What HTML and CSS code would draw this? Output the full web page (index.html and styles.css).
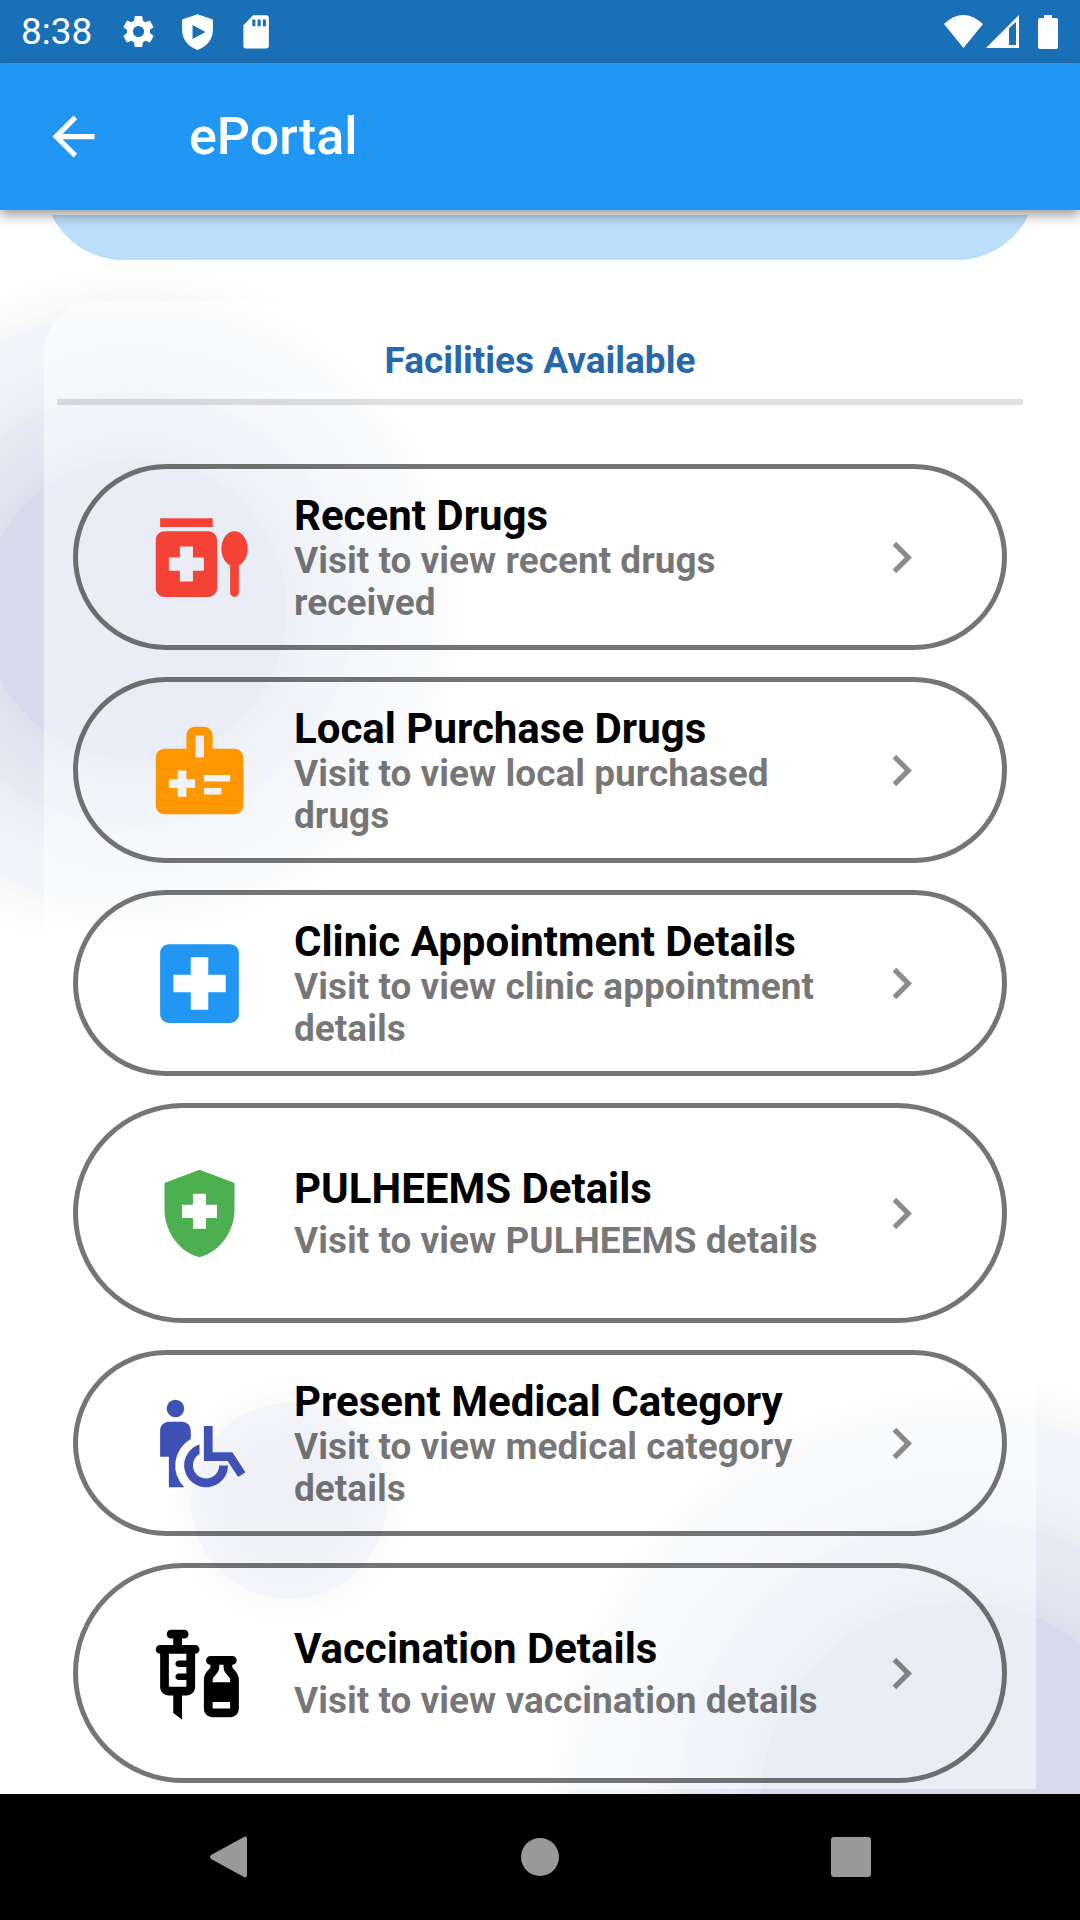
FILE: index.html
```html
<!DOCTYPE html>
<html lang="en">
<head>
<meta charset="utf-8">
<meta name="viewport" content="width=device-width, initial-scale=1">
<title>ePortal</title>
<link rel="stylesheet" href="styles.css">
</head>
<body>
<div class="status-bar">
  <span class="clock">8:38</span>
  <svg class="status-icon" viewBox="0 0 24 24" aria-hidden="true"><path fill-rule="evenodd" d="M19.400 13c.04-.3.060-.65.060-1s-.02-.7-.07-1l2.100-1.600c.2-.150.240-.420.120-.640l-2-3.460c-.12-.22-.37-.3-.6-.22l-2.480 1c-.520-.4-1.080-.73-1.690-.980l-.380-2.650A.49.490 0 0 0 14 2h-4c-.25 0-.46.180-.49.420l-.38 2.650c-.61.250-1.170.59-1.690.98l-2.490-1c-.23-.090-.49 0-.61.220l-2 3.460c-.13.220-.070.490.120.640L4.570 11a8 8 0 0 0 0 2l-2.110 1.630c-.19.150-.24.420-.12.640l2 3.460c.12.220.370.300.600.220l2.490-1c.52.400 1.080.730 1.690.980l.380 2.650c.030.240.240.420.490.420h4c.25 0 .460-.180.490-.420l.380-2.650c.610-.250 1.170-.590 1.690-.980l2.490 1c.230.090.490 0 .610-.220l2-3.460c.120-.220.070-.490-.120-.640zM12 15.600a3.600 3.600 0 1 1 0-7.200 3.600 3.600 0 0 1 0 7.200z"/></svg>
  <svg class="status-icon" viewBox="0 0 24 24" aria-hidden="true"><path fill-rule="evenodd" d="M12 .8 21.500 4q.5.200.5.800V11c0 6-4 10.800-10 13C6 21.800 2 17 2 11V4.800Q2 4.200 2.500 4zM8.800 7.800v9l8.400-4.500z"/></svg>
  <svg class="status-icon" viewBox="0 0 24 24" aria-hidden="true"><path fill-rule="evenodd" d="M18.500 1.500H9.800L3.500 8v13.500c0 .8.700 1.500 1.500 1.500h13.500c.8 0 1.500-.7 1.500-1.500V3c0-.8-.7-1.500-1.500-1.500zM9.300 4.200h2v4.400h-2zm3.400 0h2v4.400h-2zm3.400 0h2v4.400h-2z"/></svg>
  <span class="spacer"></span>
  <svg class="signals" viewBox="0 0 116 36" aria-hidden="true">
    <path d="M0 10Q19-8 39 10L19.500 34z"/>
    <path fill-rule="evenodd" d="M42 34 75 1v33zM65 14v17h7V8z"/>
    <path d="M100 1h8v3h4q2 0 2 2v27q0 2-2 2H96q-2 0-2-2V6q0-2 2-2h4z"/>
  </svg>
</div>

<header class="app-bar">
  <button class="back" type="button" aria-label="Back">
    <svg viewBox="0 0 24 24" aria-hidden="true"><path d="M20 11H7.830l5.590-5.590L12 4l-8 8 8 8 1.410-1.410L7.830 13H20z"/></svg>
  </button>
  <h1 class="app-title">ePortal</h1>
</header>

<main class="content">
  <div class="backdrop" aria-hidden="true">
    <div class="rings rings-left"><i class="ring outer"></i><i class="ring middle"></i><i class="ring inner"></i></div>
    <div class="rings rings-small"><i class="ring outer"></i><i class="ring inner"></i></div>
    <div class="rings rings-right"><i class="ring outer"></i><i class="ring middle"></i><i class="ring inner"></i></div>
  </div>

  <div class="banner"><div class="banner-shape"></div></div>

  <section class="panel">
    <h2 class="panel-title">Facilities Available</h2>
    <hr class="divider">
    <nav class="cards" aria-label="Facilities">
      <a class="card" href="#recent-drugs">
        <svg class="card-icon red" viewBox="0 0 24 24" aria-hidden="true"><path d="M3 3h12v2H3z"/><path fill-rule="evenodd" d="M14 6H4c-1.100 0-2 .9-2 2v11c0 1.100.9 2 2 2h10c1.100 0 2-.9 2-2V8c0-1.100-.9-2-2-2zm-1 9h-2.500v2.500h-3V15H5v-3h2.500V9.500h3V12H13z"/><path d="M20 6c-1.680 0-3 1.760-3 4 0 1.770.830 3.220 2 3.760V20c0 .55.450 1 1 1s1-.45 1-1v-6.240c1.170-.54 2-1.990 2-3.760 0-2.240-1.320-4-3-4z"/></svg>
        <span class="card-text"><span class="card-title">Recent Drugs</span><span class="card-sub">Visit to view recent drugs received</span></span>
        <svg class="chevron" viewBox="0 0 24 24" aria-hidden="true"><path d="M10 6 8.590 7.410 13.170 12l-4.580 4.590L10 18l6-6z"/></svg>
      </a>
      <a class="card" href="#local-purchase">
        <svg class="card-icon orange" viewBox="0 0 24 24" aria-hidden="true"><path fill-rule="evenodd" d="M20 7h-5V4c0-1.100-.9-2-2-2h-2c-1.100 0-2 .9-2 2v3H4c-1.100 0-2 .9-2 2v11c0 1.100.9 2 2 2h16c1.100 0 2-.9 2-2V9c0-1.100-.9-2-2-2zm-9-3h2v5h-2zm0 12H9v2H7v-2H5v-2h2v-2h2v2h2zm2-3h6v1.500h-6zm0 3h4v1.500h-4z"/></svg>
        <span class="card-text"><span class="card-title">Local Purchase Drugs</span><span class="card-sub">Visit to view local purchased drugs</span></span>
        <svg class="chevron" viewBox="0 0 24 24" aria-hidden="true"><path d="M10 6 8.590 7.410 13.170 12l-4.580 4.590L10 18l6-6z"/></svg>
      </a>
      <a class="card" href="#clinic-appointment">
        <svg class="card-icon blue" viewBox="0 0 24 24" aria-hidden="true"><path fill-rule="evenodd" d="M19 3H5c-1.100 0-2 .9-2 2v14c0 1.100.9 2 2 2h14c1.100 0 2-.9 2-2V5c0-1.100-.9-2-2-2zm-1 11h-4v4h-4v-4H6v-4h4V6h4v4h4z"/></svg>
        <span class="card-text"><span class="card-title">Clinic Appointment Details</span><span class="card-sub">Visit to view clinic appointment details</span></span>
        <svg class="chevron" viewBox="0 0 24 24" aria-hidden="true"><path d="M10 6 8.590 7.410 13.170 12l-4.580 4.590L10 18l6-6z"/></svg>
      </a>
      <a class="card tall" href="#pulheems">
        <svg class="card-icon green" viewBox="0 0 24 24" aria-hidden="true"><path fill-rule="evenodd" d="M12 2 4 5v6.090c0 5.050 3.410 9.760 8 10.910 4.590-1.150 8-5.860 8-10.910V5zm4 11h-2.500v2.500h-3V13H8v-3h2.500V7.500h3V10H16z"/></svg>
        <span class="card-text"><span class="card-title">PULHEEMS Details</span><span class="card-sub">Visit to view PULHEEMS details</span></span>
        <svg class="chevron" viewBox="0 0 24 24" aria-hidden="true"><path d="M10 6 8.590 7.410 13.170 12l-4.580 4.590L10 18l6-6z"/></svg>
      </a>
      <a class="card" href="#medical-category">
        <svg class="card-icon indigo" viewBox="0 0 24 24" aria-hidden="true"><circle cx="6.500" cy="4" r="2"/><path d="M10 10.950V9c0-1.100-.9-2-2-2H5c-1.100 0-2 .9-2 2v6h2v7h3.500A7 7 0 0 1 10 10.950z"/><path d="M16.500 17a3 3 0 1 1-4.500-2.600v-2.170A5 5 0 1 0 18.500 17z"/><path d="M13 8h2v6h4.500l3 4.550-1.660 1.110L18.430 16H13z"/></svg>
        <span class="card-text"><span class="card-title">Present Medical Category</span><span class="card-sub">Visit to view medical category details</span></span>
        <svg class="chevron" viewBox="0 0 24 24" aria-hidden="true"><path d="M10 6 8.590 7.410 13.170 12l-4.580 4.590L10 18l6-6z"/></svg>
      </a>
      <a class="card tall" href="#vaccination">
        <svg class="card-icon black" viewBox="0 0 24 24" aria-hidden="true"><path d="M11 5.500H8V4h.5c.55 0 1-.45 1-1s-.45-1-1-1h-3c-.55 0-1 .45-1 1s.45 1 1 1H6v1.500H3c-.55 0-1 .45-1 1s.45 1 1 1V15c0 1.100.9 2 2 2h1v4l2 1.500V17h1c1.100 0 2-.9 2-2V7.500c.55 0 1-.45 1-1s-.45-1-1-1zM9 9H7.250c-.41 0-.75.340-.75.750s.340.750.750.750H9V12H7.250c-.41 0-.75.340-.75.750s.340.750.750.750H9V15H5V7.500h4zM19.500 10.500V10c.55 0 1-.45 1-1s-.45-1-1-1h-5c-.55 0-1 .45-1 1s.45 1 1 1v.5c0 .5-1.500 1.160-1.500 3V20c0 1.100.9 2 2 2h4c1.100 0 2-.9 2-2v-6.500c0-1.840-1.500-2.500-1.500-3zm-3 0V10h1v.5c0 1.600 1.500 2 1.500 3V14h-4v-.5c0-1 1.500-1.400 1.500-3zM19 20h-4v-1.500h4z"/></svg>
        <span class="card-text"><span class="card-title">Vaccination Details</span><span class="card-sub">Visit to view vaccination details</span></span>
        <svg class="chevron" viewBox="0 0 24 24" aria-hidden="true"><path d="M10 6 8.590 7.410 13.170 12l-4.580 4.590L10 18l6-6z"/></svg>
      </a>
    </nav>
  </section>
</main>

<footer class="nav-bar">
  <button class="nav-button" type="button" aria-label="Back"><svg viewBox="0 0 48 48" aria-hidden="true"><path d="M38 4.500Q42 2 42 6v36q0 4-4 1.500L6.500 26.200q-3-2.200 0-4.400z"/></svg></button>
  <button class="nav-button" type="button" aria-label="Home"><svg viewBox="0 0 48 48" aria-hidden="true"><circle cx="24" cy="24" r="19"/></svg></button>
  <button class="nav-button" type="button" aria-label="Recent apps"><svg viewBox="0 0 48 48" aria-hidden="true"><rect x="4" y="4" width="40" height="40" rx="3"/></svg></button>
</footer>
</body>
</html>
```
FILE: styles.css
```css
* {
  box-sizing: border-box;
}

body {
  margin: 0;
  min-height: 100vh;
  display: flex;
  flex-direction: column;
  background: #fff;
  color: #000;
  font-family: Roboto, "Noto Sans", sans-serif;
}

button {
  padding: 0;
  border: 0;
  background: none;
}

svg {
  display: block;
  flex: none;
  fill: currentColor;
}

/* System status bar */
.status-bar {
  display: flex;
  align-items: center;
  height: 63px;
  padding: 0 20px 0 21px;
  background: #1a70b7;
  color: #fff;
}

.clock {
  margin-right: 28px;
  font-size: 37px;
  line-height: 43px;
}

.status-icon {
  width: 37px;
  height: 37px;
  margin-right: 22px;
}

.spacer {
  flex: 1;
}

.signals {
  width: 116px;
  height: 36px;
}

/* App bar */
.app-bar {
  position: relative;
  z-index: 2;
  display: flex;
  align-items: center;
  gap: 84px;
  height: 147px;
  padding: 0 42px;
  background: #2196f3;
  color: #fff;
  box-shadow: 0 5px 12px rgba(0, 0, 0, 0.4);
}

.back {
  color: inherit;
}

.back svg {
  width: 63px;
  height: 63px;
}

.app-title {
  margin: 0;
  font-size: 52px;
  font-weight: 500;
  line-height: 61px;
}

/* Scrolling content */
.content {
  position: relative;
  flex: 1;
  padding: 5px 44px;
}

.backdrop {
  position: absolute;
  inset: 0;
  overflow: hidden;
}

.rings {
  position: absolute;
  display: grid;
  place-items: center;
}

.ring {
  grid-area: 1 / 1;
  border-radius: 50%;
  box-shadow: 0 0 60px rgba(60, 65, 90, 0.1);
}

.outer { background: #f2f4f9; }
.middle { background: #e4e9f4; }
.inner { background: #d5dbed; }

.rings-left {
  top: 100px;
  left: -164px;
}

.rings-left .outer { width: 598px; height: 598px; }
.rings-left .middle { width: 434px; height: 434px; }
.rings-left .inner { width: 304px; height: 304px; }

.rings-small {
  top: 1193px;
  left: 191px;
}

.rings-small .outer {
  width: 196px;
  height: 196px;
  background: #e9ecf6;
}

.rings-small .inner {
  width: 120px;
  height: 120px;
  background: #dfe2ee;
}

.rings-right {
  right: -260px;
  bottom: -386px;
}

.rings-right .outer { width: 764px; height: 764px; }
.rings-right .middle { width: 556px; height: 556px; }
.rings-right .inner { width: 394px; height: 394px; }

.banner {
  position: relative;
  display: flex;
  align-items: flex-end;
  height: 45px;
  margin-bottom: 41px;
  overflow: hidden;
}

.banner-shape {
  flex: 1 0 auto;
  height: 158px;
  border-radius: 79px;
  background: #bbdefb;
}

.panel {
  position: relative;
  padding: 38px 13px 6px;
  border-radius: 52px 52px 0 0;
  background: rgba(255, 255, 255, 0.5);
}

.panel-title {
  margin: 0;
  color: #2767ab;
  font-size: 37px;
  font-weight: 700;
  line-height: 43px;
  text-align: center;
}

.divider {
  height: 6px;
  margin: 17px 0 59px;
  border: 0;
  background: rgba(0, 0, 0, 0.12);
}

.cards {
  display: flex;
  flex-direction: column;
  gap: 27px;
  padding: 0 16px;
}

.card {
  display: flex;
  align-items: center;
  gap: 42px;
  min-height: 186px;
  padding: 0 69px;
  border: 5px solid rgba(0, 0, 0, 0.54);
  border-radius: 110px;
  color: inherit;
  text-decoration: none;
}

.card-icon {
  width: 105px;
  height: 105px;
}

.red { color: #f44336; }
.orange { color: #ff9800; }
.blue { color: #2196f3; }
.green { color: #4caf50; }
.indigo { color: #3f51b5; }
.black { color: #000; }

.card-text {
  flex: 1;
  display: flex;
  flex-direction: column;
}

.card-title {
  font-size: 42px;
  font-weight: 700;
  line-height: 49px;
}

.card-sub {
  color: rgba(0, 0, 0, 0.54);
  font-size: 37px;
  font-weight: 700;
  line-height: 42px;
}

.tall {
  min-height: 220px;
}

.tall .card-text {
  gap: 7px;
}

.chevron {
  width: 63px;
  height: 63px;
  color: rgba(0, 0, 0, 0.45);
}

/* System navigation */
.nav-bar {
  display: flex;
  align-items: center;
  justify-content: center;
  gap: 263px;
  height: 126px;
  background: #000;
  color: #999;
}

.nav-button {
  color: inherit;
}

.nav-button svg {
  width: 48px;
  height: 48px;
}
```
